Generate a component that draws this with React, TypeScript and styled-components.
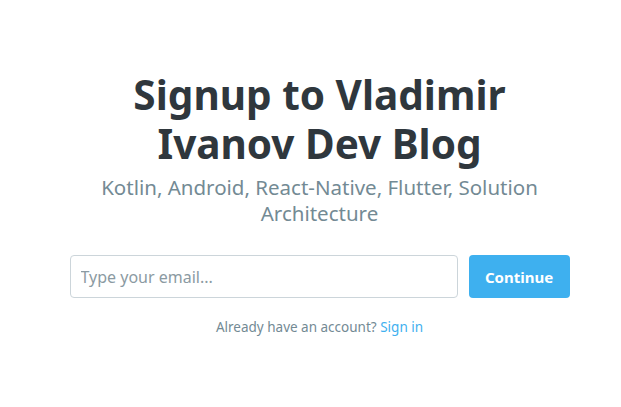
import React from "react";
import styled, { createGlobalStyle } from "styled-components";

const Global = createGlobalStyle`
  html, body { margin: 0; padding: 0; background: #fff; }
  body { font-family: "Noto Sans", "Open Sans", sans-serif; -webkit-font-smoothing: antialiased; }
  * { box-sizing: border-box; }
`;

const Page = styled.main`
  display: flex;
  justify-content: center;
  padding: 70px 0 0 18px;
  min-height: 407px;
`;

const Content = styled.section`
  width: 500px;
  display: flex;
  flex-direction: column;
  align-items: center;
  text-align: center;
`;

const Title = styled.h1`
  margin: 0;
  width: 420px;
  font-size: 40.5px;
  line-height: 49px;
  font-weight: 700;
  color: #2f373d;
  letter-spacing: 0;
`;

const Subtitle = styled.p`
  margin: 6px 0 0;
  font-size: 20.5px;
  line-height: 26px;
  color: #738a94;
  font-weight: 400;
`;

const Form = styled.form`
  margin-top: 29px;
  width: 100%;
  display: flex;
  gap: 11px;
`;

const EmailInput = styled.input`
  flex: 1;
  height: 43px;
  border: 1px solid #ccd5da;
  border-radius: 4px;
  padding: 0 10px;
  font-family: inherit;
  font-size: 16px;
  color: #2f373d;
  outline: none;
  &::placeholder { color: #8b9aa2; }
`;

const Button = styled.button`
  width: 101px;
  height: 43px;
  border: none;
  border-radius: 4px;
  background: #3eb0ef;
  color: #fff;
  font-family: inherit;
  font-size: 15px;
  font-weight: 700;
`;

const Footer = styled.p`
  margin: 20px 0 0;
  font-size: 13.5px;
  line-height: 18px;
  color: #738a94;
`;

const Link = styled.a`
  color: #3eb0ef;
  text-decoration: none;
`;

export default function App() {
  return (
    <>
      <Global />
      <Page>
        <Content>
          <Title>Signup to Vladimir Ivanov Dev Blog</Title>
          <Subtitle>Kotlin, Android, React-Native, Flutter, Solution Architecture</Subtitle>
          <Form onSubmit={(e) => e.preventDefault()}>
            <EmailInput type="email" placeholder="Type your email..." />
            <Button type="submit">Continue</Button>
          </Form>
          <Footer>
            Already have an account? <Link href="#">Sign in</Link>
          </Footer>
        </Content>
      </Page>
    </>
  );
}
